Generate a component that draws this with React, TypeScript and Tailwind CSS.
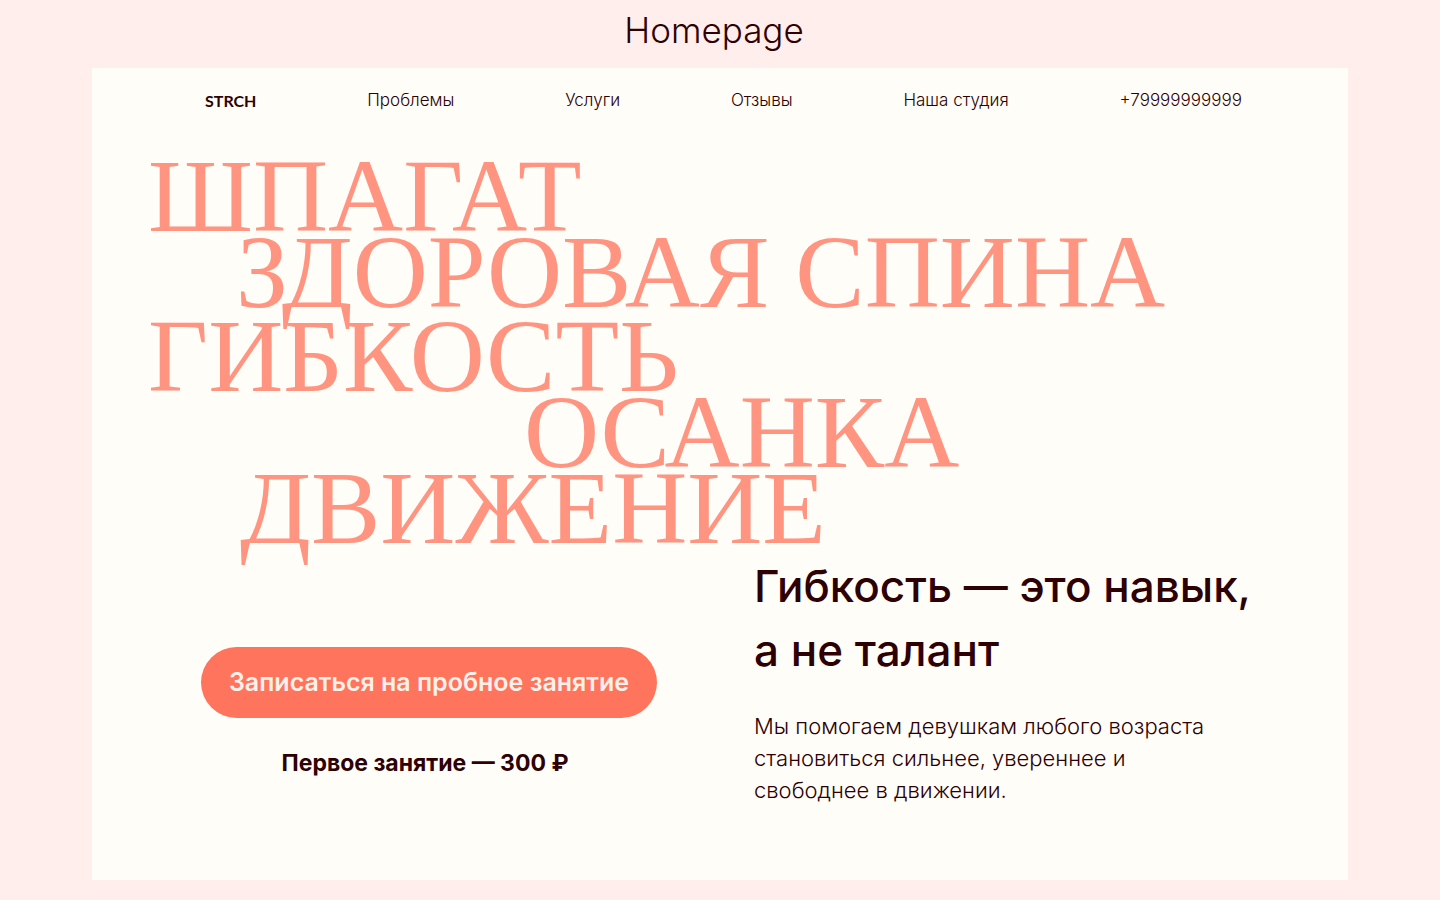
const navLinks = [
  { label: "Проблемы", href: "#problems" },
  { label: "Услуги", href: "#services" },
  { label: "Отзывы", href: "#reviews" },
  { label: "Наша студия", href: "#studio" },
  { label: "+79999999999", href: "tel:+79999999999" },
];

const Header = () => {
  return (
    <header className="pr-[106px] pl-[113px]">
      <nav className="flex h-[66px] items-center justify-between text-[17px] font-light">
        <a href="#home" className="font-['Lato',sans-serif] text-base font-bold">STRCH</a>
        {navLinks.map((link) => (
          <a key={link.href} href={link.href} className="hover:text-[#ff745c]">
            {link.label}
          </a>
        ))}
      </nav>
    </header>
  );
};

const HeroTitle = () => {
  return (
    <h2 className="flex flex-col pt-6 pl-14 font-['Liberation_Serif',serif] text-[104px] leading-[76px] whitespace-nowrap text-[#ff9581]">
      <span>ШПАГАТ</span>
      <span className="pl-[88px]">ЗДОРОВАЯ СПИНА</span>
      <span className="pt-2">ГИБКОСТЬ</span>
      <span className="pl-[376px]">ОСАНКА</span>
      <span className="pl-[92px]">ДВИЖЕНИЕ</span>
    </h2>
  );
};

const App = () => {
  return (
    <div className="min-h-screen bg-[#ffeeeb] px-[92px] pb-5 font-['Inter',sans-serif] text-[#2d0003]">
      <h1 className="flex h-[68px] items-center justify-center pr-3 pb-2 text-[35px] font-light">Homepage</h1>

      <main id="home" className="bg-[#fffdf8] pb-[74px]">
        <Header />
        <HeroTitle />

        <section className="grid grid-cols-[662fr_594fr] pt-2">
          <div className="flex flex-col items-center pt-[93px] pl-3">
            <button
              type="button"
              className="h-[71px] rounded-full bg-[#ff745c] px-7 text-[25px] font-semibold text-[#fff1ea] hover:bg-[#f5654c]"
            >
              Записаться на пробное занятие
            </button>
            <p className="pt-7 pr-2 text-[23px] font-bold">Первое занятие — 300 ₽</p>
          </div>

          <div>
            <h3 className="text-[44px] leading-[64px] font-medium">
              Гибкость — это навык,
              <br />
              а не талант
            </h3>
            <p className="pt-7 text-[22px] leading-8 font-light">
              Мы помогаем девушкам любого возраста
              <br />
              становиться сильнее, увереннее и
              <br />
              свободнее в движении.
            </p>
          </div>
        </section>
      </main>
    </div>
  );
};

export default App;
